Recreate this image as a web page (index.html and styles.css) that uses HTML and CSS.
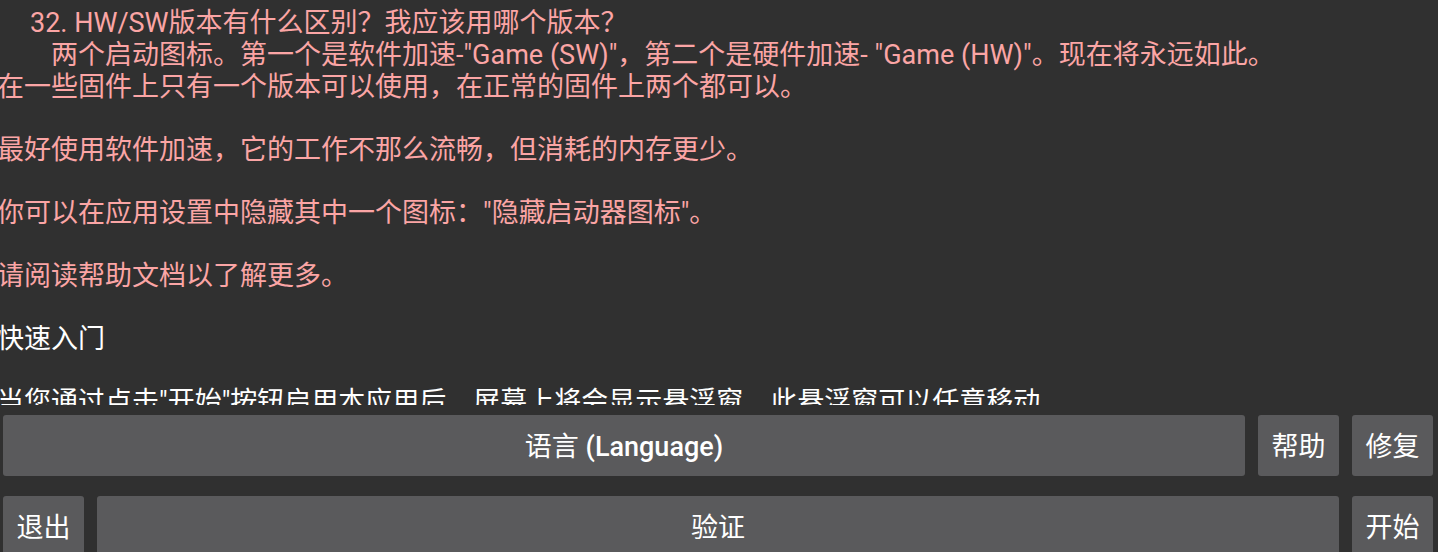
FILE: index.html
```html
<!DOCTYPE html>
<html lang="zh-CN">
<head>
<meta charset="utf-8">
<title>Game</title>
<link rel="stylesheet" href="styles.css">
</head>
<body>
<main class="screen">
  <section class="log">
    <div class="notice">
      <p class="question">32. HW/SW版本有什么区别？我应该用哪个版本？</p>
      <p class="answer">两个启动图标。第一个是软件加速-"Game (SW)"，第二个是硬件加速- "Game (HW)"。现在将永远如此。</p>
      <p class="para">在一些固件上只有一个版本可以使用，在正常的固件上两个都可以。</p>
      <p class="para">最好使用软件加速，它的工作不那么流畅，但消耗的内存更少。</p>
      <p class="para">你可以在应用设置中隐藏其中一个图标："隐藏启动器图标"。</p>
      <p class="para">请阅读帮助文档以了解更多。</p>
    </div>
    <p class="para">快速入门</p>
    <p class="para">当您通过点击"开始"按钮启用本应用后，屏幕上将会显示悬浮窗，此悬浮窗可以任意移动</p>
  </section>
  <div class="row">
    <button class="btn wide" type="button">语言 <span class="latin">(Language)</span></button>
    <button class="btn" type="button">帮助</button>
    <button class="btn" type="button">修复</button>
  </div>
  <div class="row">
    <button class="btn" type="button">退出</button>
    <button class="btn wide" type="button">验证</button>
    <button class="btn" type="button">开始</button>
  </div>
</main>
</body>
</html>
```
FILE: styles.css
```css
body {
  margin: 0;
  background: #303030;
  color: #fff;
  font-family: Roboto, "Noto Sans CJK SC", sans-serif;
  font-size: 27px;
  overflow: hidden;
}
.screen {
  display: flex;
  flex-direction: column;
  gap: 20px;
}
.log {
  height: 405px;
  margin-bottom: -10px;
  box-sizing: border-box;
  padding-top: 7px;
  overflow: hidden;
  white-space: nowrap;
}
.log p {
  margin: 0;
  line-height: 32px;
}
.log .para {
  margin-left: -3px;
  margin-bottom: 31px;
}
.notice { color: #fba5a5; }
.log .question { margin-left: 30px; }
.log .answer { margin-left: 51px; }
.row {
  display: flex;
  gap: 13px;
  padding: 0 5px 0 3px;
}
.btn {
  flex: 0 0 81px;
  height: 61px;
  padding: 0 0 2px;
  border: 0;
  border-radius: 3px;
  background: #5a5a5c;
  color: #fff;
  font: inherit;
}
.wide { flex: 1 1 auto; }
.latin { font-weight: 500; }
```
